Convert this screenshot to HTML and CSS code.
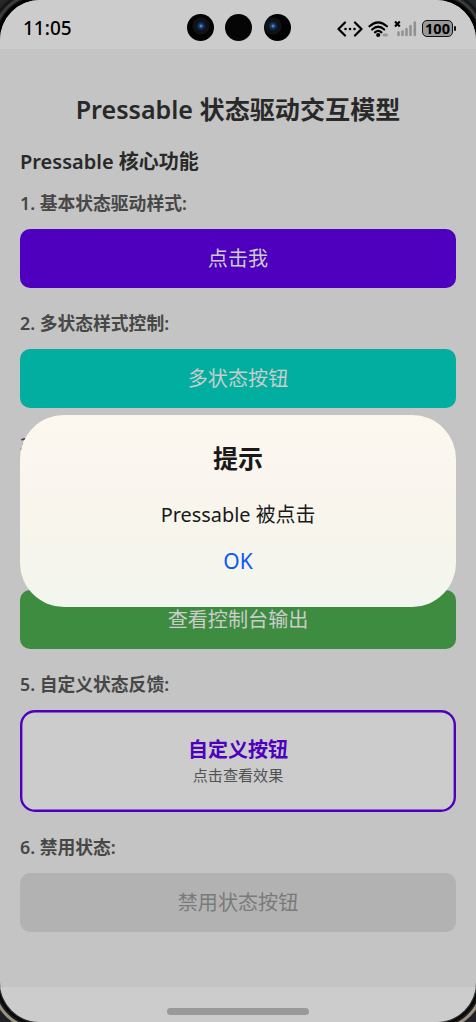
FILE: index.html
```html
<!DOCTYPE html>
<html lang="zh-CN">
<head>
    <meta charset="UTF-8">
    <meta name="viewport" content="width=device-width, initial-scale=1.0">
    <title>Pressable</title>
    <link rel="stylesheet" href="styles.css">
</head>
<body>
    <div class="phone">
        <div class="screen">
            <header class="status-bar">
                <span class="time">11:05</span>
                <div class="cameras">
                    <span class="camera lens-right"></span>
                    <span class="camera"></span>
                    <span class="camera lens-left"></span>
                </div>
                <div class="status-icons">
                    <svg class="icon-link" width="26" height="16" viewBox="0 0 26 16">
                        <path d="M8 1.5 1.5 8 8 14.5M18 1.5 24.5 8 18 14.5" fill="none" stroke="#000" stroke-width="2.2" stroke-linejoin="round" stroke-linecap="round"/>
                        <circle cx="8.5" cy="8" r="1.3"/><circle cx="13" cy="8" r="1.3"/><circle cx="17.5" cy="8" r="1.3"/>
                    </svg>
                    <svg class="icon-wifi" width="21" height="18" viewBox="0 0 21 18">
                        <path d="M1.5 6.3Q10.2-1.7 18.9 6.3M4.2 9.5Q10.2 4 16.200 9.500M7 12.300Q10.200 9.500 13.400 12.300" fill="none" stroke="#000" stroke-width="2.2" stroke-linecap="round"/>
                        <circle cx="10.2" cy="15" r="2.1"/>
                        <rect x="14.5" y="13.4" width="5.5" height="3.2" rx="1.6" fill="#999"/>
                    </svg>
                    <svg class="icon-signal" width="23" height="17" viewBox="0 0 23 17">
                        <path d="M1 1.500 5.800 6.500M5.800 1.500 1 6.500" stroke="#000" stroke-width="2.2"/>
                        <path d="M4.500 12.500v2.500M8.500 11.500v3.500M12.500 9v6M16.500 6v9M20.800 2.500V15" stroke="#929292" stroke-width="2.6" stroke-linecap="round"/>
                    </svg>
                    <span class="battery">100</span>
                </div>
            </header>

            <main class="content">
                <h1>Pressable 状态驱动交互模型</h1>
                <h2>Pressable 核心功能</h2>
                <section class="demo">
                    <h3>1. 基本状态驱动样式:</h3>
                    <button class="btn purple">点击我</button>
                </section>
                <section class="demo">
                    <h3>2. 多状态样式控制:</h3>
                    <button class="btn teal">多状态按钮</button>
                </section>
                <section class="demo">
                    <h3>3.</h3>
                    <div class="btn"></div>
                </section>
                <section class="demo">
                    <h3></h3>
                    <button class="btn green">查看控制台输出</button>
                </section>
                <section class="demo">
                    <h3>5. 自定义状态反馈:</h3>
                    <button class="card">
                        <span class="card-title">自定义按钮</span>
                        <span class="card-text">点击查看效果</span>
                    </button>
                </section>
                <section class="demo">
                    <h3>6. 禁用状态:</h3>
                    <button class="btn disabled" disabled>禁用状态按钮</button>
                </section>
            </main>

            <footer class="nav-bar"><span class="home-bar"></span></footer>
        </div>

        <div class="dialog" role="dialog">
            <h4>提示</h4>
            <p>Pressable 被点击</p>
            <button class="ok">OK</button>
        </div>
    </div>
</body>
</html>
```
FILE: styles.css
```css
* {
    box-sizing: border-box;
}
body {
    margin: 0;
    font-family: "Noto Sans", "Noto Sans CJK SC", sans-serif;
}
h1, h2, h3, h4, p {
    margin: 0;
}
button {
    border: none;
    padding: 0;
    font-family: inherit;
}
.phone {
    position: relative;
    width: 476px;
    height: 1022px;
    overflow: hidden;
    /* bezel, one gradient per corner */
    background:
        radial-gradient(circle at 40px 40px, #000 43px, #444 46px, #111 49px, #25282c 52px) 0 0 / 50% 50% no-repeat,
        radial-gradient(circle at 198px 40px, #000 43px, #444 46px, #111 49px, #25282c 52px) 100% 0 / 50% 50% no-repeat,
        radial-gradient(circle at 40px 471px, #777 39px, #000 42px, #222 45px, #9c9282 46px, #9c9282 48px, #202226 49px) 0 100% / 50% 50% no-repeat,
        radial-gradient(circle at 198px 471px, #777 39px, #000 42px, #222 45px, #9c9282 46px, #9c9282 48px, #202226 49px) 100% 100% / 50% 50% no-repeat;
}
.screen {
    height: 1022px;
    display: flex;
    flex-direction: column;
    background: #c4c4c4;
    border-radius: 40px;
    overflow: hidden;
}

/* status bar */
.status-bar {
    height: 49px;
    background: #cccccc;
    display: grid;
    grid-template-columns: 1fr 104px 1fr;
    align-items: center;
    padding: 6px 20px 0 23px;
}
.time {
    padding-top: 1px;
    font-size: 19px;
    font-weight: 500;
    line-height: 24px;
}
.cameras {
    display: flex;
    justify-content: space-between;
    position: relative;
    left: -1px;
}
.camera {
    width: 27px;
    height: 27px;
    border-radius: 50%;
    background: #050505;
}
.lens-right {
    background: radial-gradient(circle at 14px 12px, #6cadf0 0, #173a6b 2px, #0c121d 5px, #111 8px, #020202 9px);
}
.lens-left {
    background: radial-gradient(circle at 9px 12px, #6cadf0 0, #173a6b 2px, #0c121d 5px, #111 8px, #020202 9px);
}
.status-icons {
    display: flex;
    align-items: center;
    justify-content: flex-end;
    gap: 5px;
    padding-top: 2px;
}
.battery {
    position: relative;
    width: 31px;
    height: 17px;
    margin-right: 3px;
    border: 1px solid #111;
    border-radius: 5px;
    background: #999;
    font-family: "Open Sans", sans-serif;
    font-size: 14.5px;
    font-weight: 700;
    line-height: 15px;
    text-align: center;
}
.battery::after {
    content: "";
    position: absolute;
    right: -4px;
    top: 5px;
    width: 2px;
    height: 5px;
    border-radius: 1px;
    background: #111;
}

/* page */
.content {
    flex: 1;
    padding: 43px 20px 0;
}
h1 {
    font-size: 25.1px;
    font-weight: 600;
    line-height: 34px;
    text-align: center;
    color: #292929;
}
h2 {
    margin-top: 22px;
    font-size: 20px;
    font-weight: 600;
    line-height: 28px;
    color: #292929;
}
.demo {
    margin-top: 15px;
    margin-bottom: 23.3px;
}
.demo + .demo {
    margin-top: 0;
}
h3 {
    height: 24px;
    margin-bottom: 14px;
    font-size: 17.8px;
    font-weight: 600;
    line-height: 24px;
    color: #474747;
}
.btn {
    display: block;
    width: 100%;
    height: 59px;
    border-radius: 10px;
    font-size: 20.1px;
    line-height: 28px;
    color: #cccccc;
}
.purple {
    background: #4e00be;
}
.teal {
    background: #02ae9f;
}
.green {
    background: #3e8c40;
    padding-top: 1px;
}
.disabled {
    background: #b2b2b2;
    color: #7a7a7a;
}
.card {
    width: 100%;
    height: 102px;
    display: flex;
    flex-direction: column;
    align-items: center;
    justify-content: center;
    border-radius: 15px;
    background: #cccccc;
    box-shadow: inset 0 0 0 2.4px #4e00be;
}
.card-title {
    padding-top: 1px;
    font-size: 20px;
    font-weight: 700;
    line-height: 28px;
    color: #4e00be;
}
.card-text {
    font-size: 15.1px;
    line-height: 23px;
    color: #525252;
}

/* home indicator */
.nav-bar {
    height: 35px;
    background: #cccccc;
    display: flex;
    justify-content: center;
    align-items: flex-end;
    padding-bottom: 7px;
}
.home-bar {
    width: 142px;
    height: 7px;
    border-radius: 4px;
    background: #999999;
}

/* alert */
.dialog {
    position: absolute;
    left: 20px;
    top: 415px;
    width: 436px;
    height: 192px;
    border-radius: 44px;
    background: linear-gradient(#fcf8f0, #faf5ee 35%, #f7f5ec 60%, #f3f6ef);
    display: flex;
    flex-direction: column;
    align-items: center;
    padding-top: 25px;
    color: #191919;
}
.dialog h4 {
    font-size: 25px;
    font-weight: 700;
    line-height: 36px;
}
.dialog p {
    margin-top: 25px;
    font-size: 19.9px;
    line-height: 28px;
}
.ok {
    margin-top: 18px;
    background: none;
    font-size: 21px;
    line-height: 28px;
    color: #0a59f7;
}
```
